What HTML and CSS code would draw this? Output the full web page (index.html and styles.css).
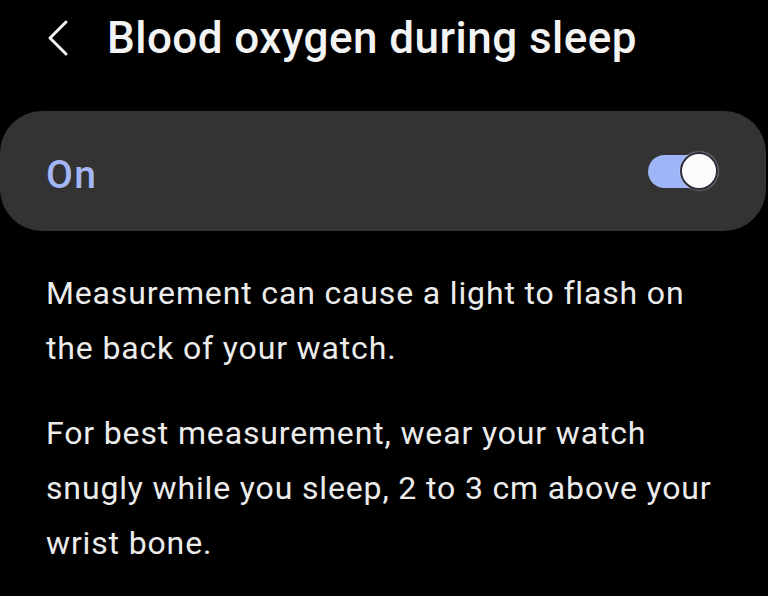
FILE: index.html
```html
<!DOCTYPE html>
<html lang="en">
<head>
  <meta charset="UTF-8" />
  <meta name="viewport" content="width=device-width, initial-scale=1.0"/>
  <title>Blood oxygen during sleep</title>
  <link rel="stylesheet" href="styles.css">
</head>
<body>

  <header class="top-bar">
    <a class="back" href="#">
      <svg width="24" height="38" viewBox="0 0 24 38">
        <polyline points="20,3 4,19 20,35" fill="none" stroke="#f2f2f2" stroke-width="3" stroke-linecap="round" stroke-linejoin="round"/>
      </svg>
    </a>
    <h1>Blood oxygen during sleep</h1>
  </header>

  <!-- Master switch -->
  <div class="switch-card">
    <span class="switch-label">On</span>
    <label class="toggle">
      <input type="checkbox" checked>
      <span class="track"></span>
      <span class="thumb"></span>
    </label>
  </div>

  <section class="info">
    <p>Measurement can cause a light to flash on the back of your watch.</p>
    <p>For best measurement, wear your watch snugly while you sleep, 2 to 3 cm above your wrist bone.</p>
  </section>

</body>
</html>
```

FILE: styles.css
```css
body {
  margin: 0;
  background: #000;
  color: #ececec;
  font-family: Roboto, "Noto Sans", sans-serif;
  overflow: hidden;
}
.top-bar {
  display: flex;
  align-items: center;
  height: 76px;
  padding-left: 46px;
}
.back {
  display: flex;
  width: 24px;
  margin-right: 37px;
}
.top-bar h1 {
  margin: 0;
  font-size: 44px;
  font-weight: 500;
  color: #f4f4f4;
  letter-spacing: 0.45px;
}
.switch-card {
  display: flex;
  align-items: center;
  justify-content: space-between;
  height: 120px;
  margin: 35px 2px 0 0;
  padding: 0 48px 0 46px;
  background: #333333;
  border-radius: 42px;
}
.switch-label {
  margin-top: 7px;
  font-size: 39px;
  font-weight: 500;
  letter-spacing: 1.5px;
  color: #a3b6f6;
}
.toggle {
  position: relative;
  width: 70px;
  height: 38px;
}
.toggle input {
  display: none;
}
.track {
  position: absolute;
  left: 0;
  top: 3px;
  width: 60px;
  height: 33px;
  border-radius: 17px;
  background: #a0b5f8;
}
.thumb {
  position: absolute;
  right: 0;
  top: 0;
  width: 38px;
  height: 38px;
  border-radius: 50%;
  background: #fcfcfc;
  border: 2px solid #2b2e3a;
  box-sizing: border-box;
  box-shadow: 0 0 2px #d8dcf0;
}
.info {
  padding: 35px 40px 0 46px;
}
.info p {
  margin: 0 0 30px;
  font-size: 32px;
  line-height: 55px;
  letter-spacing: 0.85px;
}
```
